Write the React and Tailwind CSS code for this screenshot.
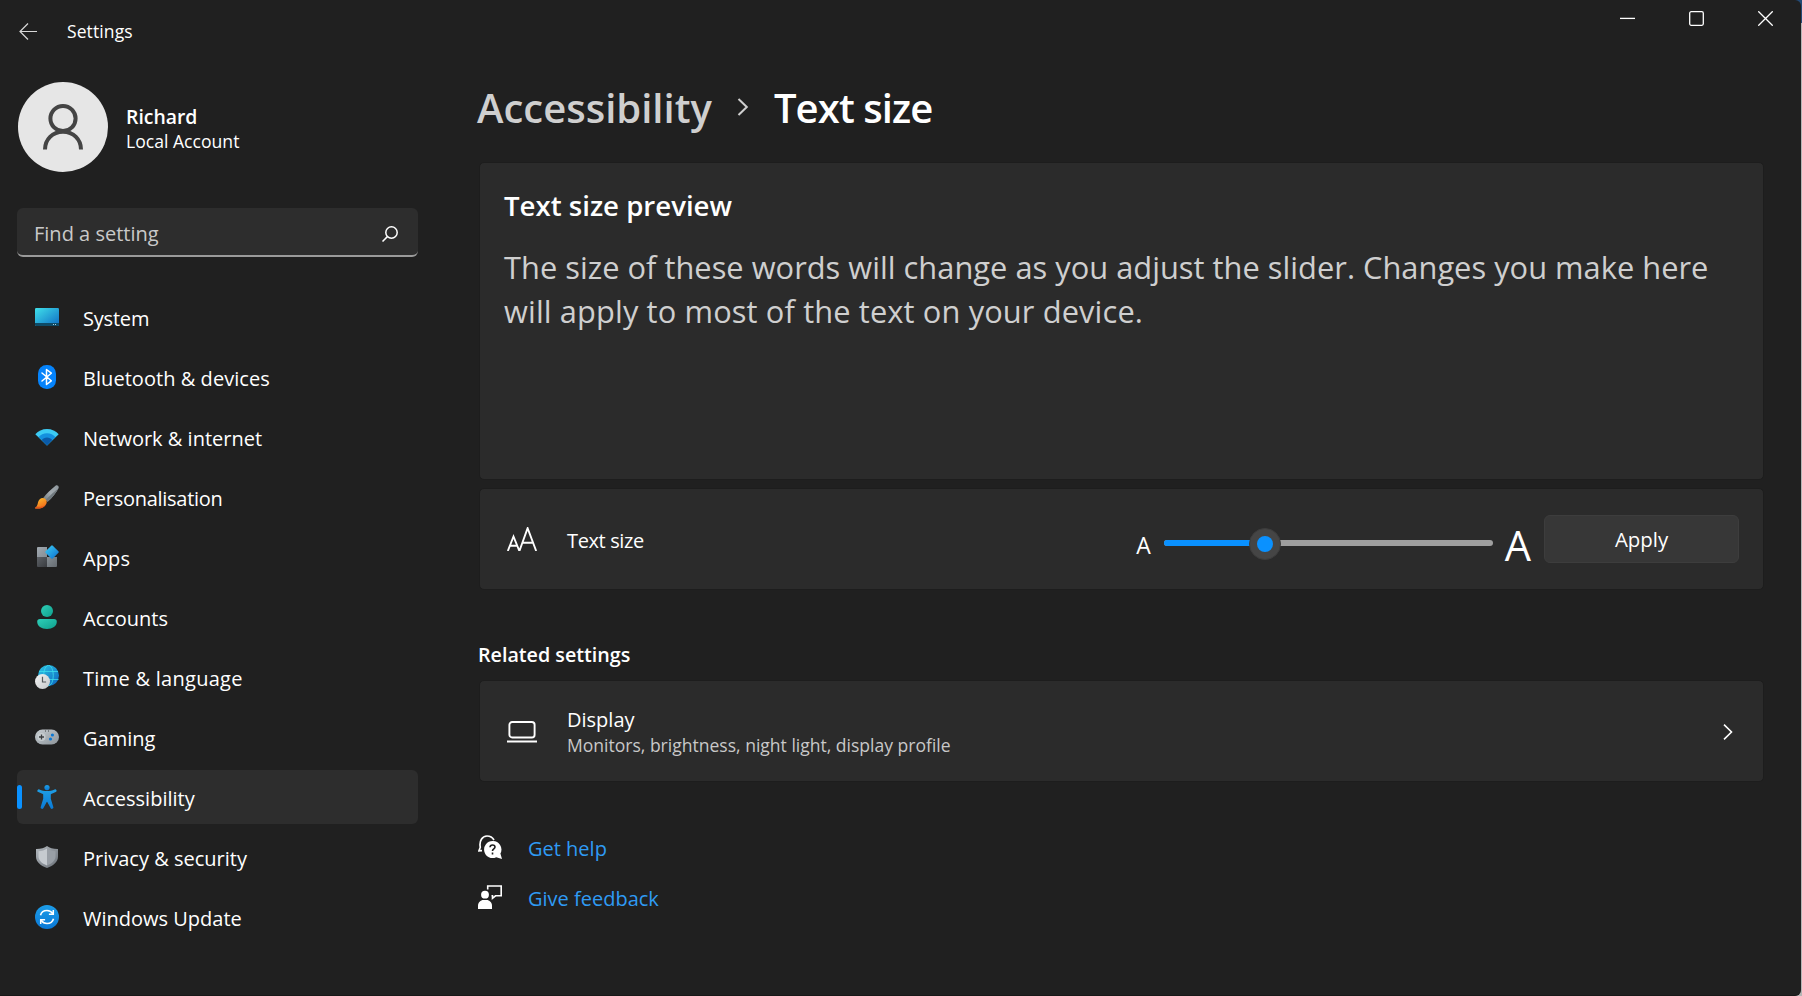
import React from 'react';

/* ---------- navigation icons (24 x 24) ---------- */

const SystemIcon = () => (
  <svg width="24" height="24" viewBox="0 0 24 24">
    <defs>
      <linearGradient id="sys" x1="0" y1="0" x2="1" y2="1">
        <stop offset="0" stopColor="#3fe0ea" />
        <stop offset="1" stopColor="#0f6cc4" />
      </linearGradient>
    </defs>
    <rect x="0" y="3" width="24" height="18" rx="1.2" fill="url(#sys)" />
    <path d="M0 18h24v1.8a1.2 1.2 0 0 1-1.2 1.2H1.200A1.200 1.200 0 0 1 0 19.800z" fill="#0e4a66" />
    <rect x="18" y="19" width="1" height="1" fill="#a9cfe0" />
    <rect x="20" y="19" width="1" height="1" fill="#a9cfe0" />
  </svg>
);

const BluetoothIcon = () => (
  <svg width="24" height="24" viewBox="0 0 24 24">
    <rect x="3" y="0" width="18" height="24" rx="8.5" fill="#0583fb" />
    <path d="M7 8l9.300 7.800L11.500 19.500V4.500l4.800 3.700L7 16" fill="none" stroke="#fff" strokeWidth="1.500" strokeLinejoin="round" strokeLinecap="round" />
  </svg>
);

const WifiIcon = () => (
  <svg width="24" height="24" viewBox="0 0 24 24">
    <path d="M12 4C7.200 4 3.200 6 .3 9.200L12 20.500 23.700 9.200C20.800 6 16.800 4 12 4z" fill="#3ccbf4" />
    <path d="M12 8.300c-3.500 0-6.300 1.400-8.400 3.700L12 20.500l8.400-8.500c-2.100-2.300-4.900-3.700-8.400-3.700z" fill="#1490df" />
    <path d="M12 12.600c-2.200 0-4 .9-5.300 2.400L12 20.500l5.300-5.500c-1.300-1.500-3.100-2.400-5.300-2.400z" fill="#0a5aa8" />
  </svg>
);

const BrushIcon = () => (
  <svg width="24" height="24" viewBox="0 0 24 24">
    <defs>
      <linearGradient id="brh" x1="1" y1="0" x2="0" y2="1">
        <stop offset="0" stopColor="#8e979c" />
        <stop offset=".5" stopColor="#a3abb0" />
        <stop offset="1" stopColor="#6e777c" />
      </linearGradient>
      <linearGradient id="brt" x1="0" y1="0" x2=".6" y2="1">
        <stop offset="0" stopColor="#ffc530" />
        <stop offset="1" stopColor="#f06a1a" />
      </linearGradient>
    </defs>
    <path d="M20.500.8c1.600-1.300 4 .5 3 2.500-1.600 3.200-6.600 10.200-10.900 13.500L8.200 12.900C11.200 9.200 16.500 4 20.500.8z" fill="url(#brh)" />
    <path d="M23.500 3.300c-1.600 3.200-6.600 10.200-10.900 13.500l-2-1.800C14 11.500 20 6 23.500 3.300z" fill="#70797e" />
    <path d="M4.500 14.400c1.900-1.800 4.600-1.700 6.100-.1 1.600 1.700 1.500 4.300-.3 6.100C7.700 23.500 3.200 24 .5 23.400c-.6-.2-.5-.7 0-1 2.900-1.700 1.700-5.700 4-8z" fill="url(#brt)" />
    <path d="M.5 23.400c2.700.6 7.200.1 9.800-3-2 .9-5.800 1.700-8.300 1-.4.500-.9.800-1.500 1-.5.300-.6.800 0 1z" fill="#e2571c" />
  </svg>
);

const AppsIcon = () => (
  <svg width="24" height="24" viewBox="0 0 24 24">
    <defs>
      <linearGradient id="apa" x1="0" y1="0" x2="1" y2="1">
        <stop offset="0" stopColor="#a1a9b0" />
        <stop offset="1" stopColor="#858d94" />
      </linearGradient>
      <linearGradient id="apb" x1="0" y1="0" x2="1" y2="1">
        <stop offset="0" stopColor="#5d6166" />
        <stop offset="1" stopColor="#393c40" />
      </linearGradient>
      <linearGradient id="apc" x1="0" y1="0" x2="1" y2="1">
        <stop offset="0" stopColor="#878f95" />
        <stop offset="1" stopColor="#646a70" />
      </linearGradient>
      <linearGradient id="apd" x1="0" y1="0" x2="1" y2="1">
        <stop offset="0" stopColor="#3ccdf5" />
        <stop offset="1" stopColor="#0b6fd0" />
      </linearGradient>
    </defs>
    <path d="M3 2h9v10H2V3a1 1 0 0 1 1-1z" fill="url(#apa)" />
    <path d="M2 12h10v10H3a1 1 0 0 1-1-1z" fill="url(#apb)" />
    <path d="M12 12h10v9a1 1 0 0 1-1 1h-9z" fill="url(#apc)" />
    <path d="M16.200.7a1.200 1.200 0 0 1 1.600 0l5.600 5.600a1.100 1.100 0 0 1 0 1.500l-5.600 5.600a1.200 1.200 0 0 1-1.600 0l-5.600-5.600a1.100 1.100 0 0 1 0-1.500z" fill="url(#apd)" />
  </svg>
);

const AccountsIcon = () => (
  <svg width="24" height="24" viewBox="0 0 24 24">
    <defs>
      <linearGradient id="acc" x1="0" y1="0" x2="1" y2="1">
        <stop offset="0" stopColor="#2ecfb8" />
        <stop offset="1" stopColor="#0f9f8c" />
      </linearGradient>
    </defs>
    <circle cx="12" cy="6" r="6" fill="url(#acc)" />
    <path d="M5 14h14a2.800 2.800 0 0 1 2.800 2.800C21.800 21 17.500 24 12 24s-9.800-3-9.800-7.200A2.800 2.800 0 0 1 5 14z" fill="url(#acc)" />
  </svg>
);

const TimeIcon = () => (
  <svg width="24" height="24" viewBox="0 0 24 24">
    <defs>
      <linearGradient id="glb" x1="0" y1="0" x2="1" y2="1">
        <stop offset="0" stopColor="#2fc9e6" />
        <stop offset="1" stopColor="#0b62bd" />
      </linearGradient>
      <linearGradient id="clk" x1="0" y1="0" x2="1" y2="1">
        <stop offset="0" stopColor="#f4f4f4" />
        <stop offset="1" stopColor="#c4c7c9" />
      </linearGradient>
    </defs>
    <circle cx="13.500" cy="10.500" r="10.500" fill="url(#glb)" />
    <path d="M4 6.500h19M3 14.500h20.500" stroke="#3fe0ee" strokeWidth="1" strokeOpacity=".75" fill="none" />
    <ellipse cx="13.500" cy="10.500" rx="4.800" ry="10.300" stroke="#3fe0ee" strokeWidth="1" strokeOpacity=".75" fill="none" />
    <circle cx="7.500" cy="16.500" r="7.500" fill="url(#clk)" />
    <path d="M7.500 11.700v5.300h3.600" stroke="#55595c" strokeWidth="1.200" fill="none" />
  </svg>
);

const GamingIcon = () => (
  <svg width="24" height="24" viewBox="0 0 24 24">
    <defs>
      <linearGradient id="gam" x1="0" y1="0" x2="1" y2="1">
        <stop offset="0" stopColor="#c8ced2" />
        <stop offset="1" stopColor="#8b9399" />
      </linearGradient>
    </defs>
    <rect x="0" y="4.500" width="24" height="15" rx="7.500" fill="url(#gam)" />
    <circle cx="6.500" cy="12" r="4" fill="#cfd4d7" opacity=".7" />
    <path d="M6.500 9.500v5M4 12h5" stroke="#3c4043" strokeWidth="1.300" />
    <circle cx="17.400" cy="10" r="1.600" fill="#0b78d4" />
    <circle cx="15.500" cy="14" r="1.600" fill="#0b78d4" />
    <rect x="10" y="5.500" width="1" height="1" fill="#3c4043" />
    <rect x="13" y="5.500" width="1" height="1" fill="#3c4043" />
  </svg>
);

const AccessibilityIcon = () => (
  <svg width="24" height="24" viewBox="0 0 24 24">
    <defs>
      <linearGradient id="man" x1="0" y1="0" x2="0" y2="1">
        <stop offset="0" stopColor="#1f9fe6" />
        <stop offset="1" stopColor="#0a7ad6" />
      </linearGradient>
    </defs>
    <circle cx="12" cy="2.600" r="2.600" fill="url(#man)" />
    <path d="M2.700 4.900a1.400 1.400 0 0 1 1.700-.5c2.300 1 4.800 1.700 7.600 1.700s5.300-.7 7.600-1.700a1.400 1.400 0 0 1 1.100 2.600l-4.500 1.900a.6.600 0 0 0-.4.600v4.200l2.500 8.200a1.500 1.500 0 0 1-2.900.9L12.300 17a.35.35 0 0 0-.6 0l-3.100 5.800a1.500 1.500 0 0 1-2.900-.9l2.500-8.200V9.500a.6.600 0 0 0-.4-.6L3.300 7a1.400 1.400 0 0 1-.6-2.100z" fill="url(#man)" />
  </svg>
);

const ShieldIcon = () => (
  <svg width="24" height="24" viewBox="0 0 24 24">
    <defs>
      <linearGradient id="shl" x1="0" y1="0" x2="1" y2="1">
        <stop offset="0" stopColor="#b4bac0" />
        <stop offset="1" stopColor="#6a7077" />
      </linearGradient>
    </defs>
    <path d="M12 1c2.500 2 6.500 3 11 2.900v7.600c0 5.200-4.300 9-11 11.500C5.300 20.500 1 16.700 1 11.500V3.900C5.500 4 9.500 3 12 1z" fill="url(#shl)" />
    <path d="M12 3.500v17C6.500 18.300 3.500 15.300 3.500 11.300V6.200c3.300-.1 6.300-1 8.500-2.700z" fill="#c6cbd0" />
    <path d="M12 3.500v17c5.500-2.200 8.500-5.200 8.500-9.200V6.200c-3.300-.1-6.300-1-8.500-2.700z" fill="#999fa6" />
  </svg>
);

const UpdateIcon = () => (
  <svg width="24" height="24" viewBox="0 0 24 24">
    <defs>
      <linearGradient id="upd" x1="0" y1="0" x2="0" y2="1">
        <stop offset="0" stopColor="#1c9de8" />
        <stop offset="1" stopColor="#0a78d6" />
      </linearGradient>
    </defs>
    <circle cx="12" cy="12" r="12" fill="url(#upd)" />
    <path d="M5.500 10.300C6.300 7.300 8.900 5.500 12 5.500c2.500 0 4.600 1.200 5.900 3.200M18.500 13.700c-.8 3-3.400 4.800-6.500 4.800-2.500 0-4.600-1.200-5.900-3.200" fill="none" stroke="#fff" strokeWidth="1.600" />
    <path d="M18.300 5v4.200h-4.400M5.700 19v-4.200h4.400" fill="none" stroke="#fff" strokeWidth="1.500" />
  </svg>
);

const NAV = [
  ['System', SystemIcon, 'tracking-[-0.2px]'],
  ['Bluetooth & devices', BluetoothIcon, 'tracking-[0.05px]'],
  ['Network & internet', WifiIcon, ''],
  ['Personalisation', BrushIcon, 'tracking-[-0.27px]'],
  ['Apps', AppsIcon, 'tracking-[0.1px]'],
  ['Accounts', AccountsIcon, ''],
  ['Time & language', TimeIcon, 'tracking-[0.28px]'],
  ['Gaming', GamingIcon, ''],
  ['Accessibility', AccessibilityIcon, ''],
  ['Privacy & security', ShieldIcon, ''],
  ['Windows Update', UpdateIcon, ''],
];

/* ---------- pieces of the window ---------- */

function TitleBar() {
  return (
    <header className="flex h-[62px] items-start justify-between pl-[19px] pr-[28px]">
      <div className="flex items-center gap-[30px] pt-[17px]">
        <svg width="18" height="26" viewBox="0 0 18 26" fill="none" stroke="#d8d8d8" strokeWidth="1.2">
          <path d="M9 5.500L1 13.500l8 8M1 13.500h17" />
        </svg>
        <span className="pt-px text-[17.5px] leading-[26px] tracking-[0.1px]">Settings</span>
      </div>
      <div className="flex gap-[54px] pt-[11px]">
        <svg width="15" height="15" viewBox="0 0 15 15" stroke="#fff" strokeWidth="1.300">
          <path d="M0 7.400h15" />
        </svg>
        <svg width="15" height="15" viewBox="0 0 15 15" fill="none" stroke="#fff" strokeWidth="1.300">
          <rect x=".7" y=".7" width="13.600" height="13.600" rx="1.500" />
        </svg>
        <svg width="15" height="15" viewBox="0 0 15 15" stroke="#fff" strokeWidth="1.300">
          <path d="M.3.3l14.400 14.400M14.700.3L.3 14.700" />
        </svg>
      </div>
    </header>
  );
}

function Sidebar() {
  return (
    <aside className="flex w-[418px] shrink-0 flex-col pl-[17px] pt-5">
      <div className="flex h-[90px] items-center gap-[18px] pl-px">
        <div className="size-[90px] rounded-full bg-[#e6e6e6]">
          <svg width="90" height="90" viewBox="0 0 90 90" fill="none" stroke="#444" strokeWidth="4">
            <circle cx="45" cy="36.500" r="12.600" />
            <path d="M27 67.500C27 57.500 34.500 49.800 45 49.800S63 57.500 63 67.500" />
          </svg>
        </div>
        <div className="pt-[3px]">
          <div className="text-[19.4px] leading-[25px] font-semibold">Richard</div>
          <div className="text-[17.6px] leading-[25px]">Local Account</div>
        </div>
      </div>

      <div className="mt-9 flex h-[49px] items-center justify-between rounded-md border-b-2 border-[#9a9a9a] bg-[#2d2d2d] pl-[17px] pr-[20px]">
        <span className="pt-1 text-[20px] text-[#c9c9c9]">Find a setting</span>
        <svg className="mt-[5px]" width="16" height="16" viewBox="0 0 16 16" fill="none" stroke="#fff" strokeWidth="1.500">
          <circle cx="9.500" cy="6.500" r="5.700" />
          <path d="M5.400 10.600L.5 15.500" />
        </svg>
      </div>

      <nav className="mt-[33px] flex flex-col gap-1.5">
        {NAV.map(([label, Icon, tracking]) => {
          const active = label === 'Accessibility';
          return (
            <a key={label} className={active ? 'relative flex h-[54px] items-center gap-6 rounded-md bg-[#2d2d2d] pl-[18px]' : 'flex h-[54px] items-center gap-6 pl-[18px]'}>
              {active && <span className="absolute left-0 top-[15px] h-6 w-[5px] rounded-full bg-[#0a91ff]" />}
              <Icon />
              <span className={`pt-[3px] text-[20px] leading-7 ${tracking}`}>{label}</span>
            </a>
          );
        })}
      </nav>
    </aside>
  );
}

function Slider() {
  return (
    <div className="relative flex h-8 w-[329px] items-center">
      <span className="h-1.5 w-full rounded-full bg-[#9f9f9f]" />
      <span className="absolute left-0 top-[13px] h-1.5 w-[100px] rounded-full bg-[#0a91ff]" />
      <span className="absolute left-[85px] top-px flex size-[32px] items-center justify-center rounded-full border border-[#3c3c3c] bg-[#454545]">
        <span className="size-4 rounded-full bg-[#0a91ff]" />
      </span>
    </div>
  );
}

const card = 'rounded-[5px] border border-[#1d1d1d] bg-[#2b2b2b]';

function Content() {
  return (
    <main className="ml-[61px] flex w-[1285px] flex-col pt-5">
      <h1 className="flex h-[49px] items-center pt-px text-[40px] leading-[49px] font-semibold">
        <span className="-ml-0.5 text-[#cfcfcf]">Accessibility</span>
        <svg className="ml-[25px] mr-[25px]" width="12" height="18" viewBox="0 0 12 18" fill="none" stroke="#cfcfcf" strokeWidth="2">
          <path d="M1.500 1l8.300 8-8.300 8" />
        </svg>
        <span className="tracking-[-0.9px]">Text size</span>
      </h1>

      <section className={`${card} mt-[31px] h-[318px] px-6 pt-6`}>
        <h2 className="text-[27.6px] leading-9 font-semibold">Text size preview</h2>
        <p className="mt-[22px] text-[30.8px] leading-[44px] tracking-[0.02px] text-[#cfcfcf]">
          The size of these words will change as you adjust the slider. Changes you make here
          <br />
          <span className="tracking-[0.13px]">will apply to most of the text on your device.</span>
        </p>
      </section>

      <section className={`${card} mt-2 flex h-[102px] items-center pl-[27px] pr-6`}>
        <svg width="30" height="24" viewBox="0 0 30 24" fill="none" stroke="#fff" strokeWidth="1.900">
          <path d="M.8 24L6.500 9.500 12.400 24 20.600 1.200 29.200 24M2.900 18.700h7.300M15.300 15.700h10.700" />
        </svg>
        <span className="ml-[30px] pt-1 text-[20px] tracking-[-0.38px]">Text size</span>
        <div className="ml-auto flex h-[60px] items-center pt-2">
          <span className="pt-1 text-[23px]">A</span>
          <div className="ml-[13px] mr-3"><Slider /></div>
          <span className="pt-1 text-[41.500px]">A</span>
        </div>
        <button className="ml-[13px] h-12 w-[195px] rounded-md border border-[#3d3d3d] bg-[#373737] text-[20.4px]">Apply</button>
      </section>

      <h3 className="mt-[51px] text-[19.7px] leading-7 font-semibold -ml-px">Related settings</h3>

      <section className={`${card} mt-[11px] flex h-[102px] items-center pl-[27px] pr-[30px]`}>
        <svg className="mt-0.5" width="30" height="22" viewBox="0 0 30 22" fill="none" stroke="#fff">
          <rect x="2.400" y="1" width="25.200" height="15.500" rx="2.800" strokeWidth="1.900" />
          <path d="M0 20.500h30" strokeWidth="2" />
        </svg>
        <div className="ml-[30px] pt-[3px]">
          <div className="text-[20px] leading-[26px]">Display</div>
          <div className="text-[17.55px] leading-[25px] text-[#c8c8c8]">Monitors, brightness, night light, display profile</div>
        </div>
        <svg className="ml-auto mt-0.5" width="10" height="16" viewBox="0 0 10 16" fill="none" stroke="#fff" strokeWidth="1.600">
          <path d="M1 .6l7.500 7.400L1 15.400" />
        </svg>
      </section>

      <div className="-ml-px mt-10 flex flex-col text-[20px] text-[#2f9bf4]">
        <a className="flex h-[50px] items-center gap-[26px]">
          <svg width="24" height="24" viewBox="0 0 24 24">
            <path d="M4 15.600L.9 15.900l1.400-3.700C1 6 4.300 1 9 1c3.200 0 5.600 1.500 7 4" fill="none" stroke="#fff" strokeWidth="1.700" />
            <path d="M14.500 6a8.500 8.500 0 1 0 3.700 16.200L24 24l-1.600-5.500A8.500 8.500 0 0 0 14.500 6z" fill="#fff" />
            <path d="M12 12.300c.1-1.500 1.100-2.300 2.500-2.300s2.500.8 2.500 2.100c0 1.800-2.500 2-2.500 4M14.500 17.500v2" fill="none" stroke="#202020" strokeWidth="1.600" />
          </svg>
          <span className="pt-[3px]">Get help</span>
        </a>
        <a className="flex h-[50px] items-center gap-[26px]">
          <svg width="24" height="24" viewBox="0 0 24 24">
            <circle cx="7" cy="9.700" r="3.900" fill="#fff" />
            <path d="M0 24v-3.500C0 17.500 2.500 15 5.500 15h3c3 0 5.500 2.500 5.500 5.500V24z" fill="#fff" />
            <path d="M9.700 4.500V1h13.500v9.800h-5.700l-3 2.500v-2.500h-1" fill="none" stroke="#fff" strokeWidth="1.600" />
          </svg>
          <span className="pt-[3px]">Give feedback</span>
        </a>
      </div>
    </main>
  );
}

export default function App() {
  return (
    <div className="h-[996px] w-[1802px] overflow-hidden bg-[linear-gradient(#234a75_0_23px,#b5b5b5_23px)] pr-px text-white [font-family:'Open_Sans','Noto_Sans',sans-serif]">
      <div className="flex h-[996px] flex-col rounded-r-md border-b border-[#181818] bg-[#202020]">
        <TitleBar />
        <div className="flex">
          <Sidebar />
          <Content />
        </div>
      </div>
    </div>
  );
}
